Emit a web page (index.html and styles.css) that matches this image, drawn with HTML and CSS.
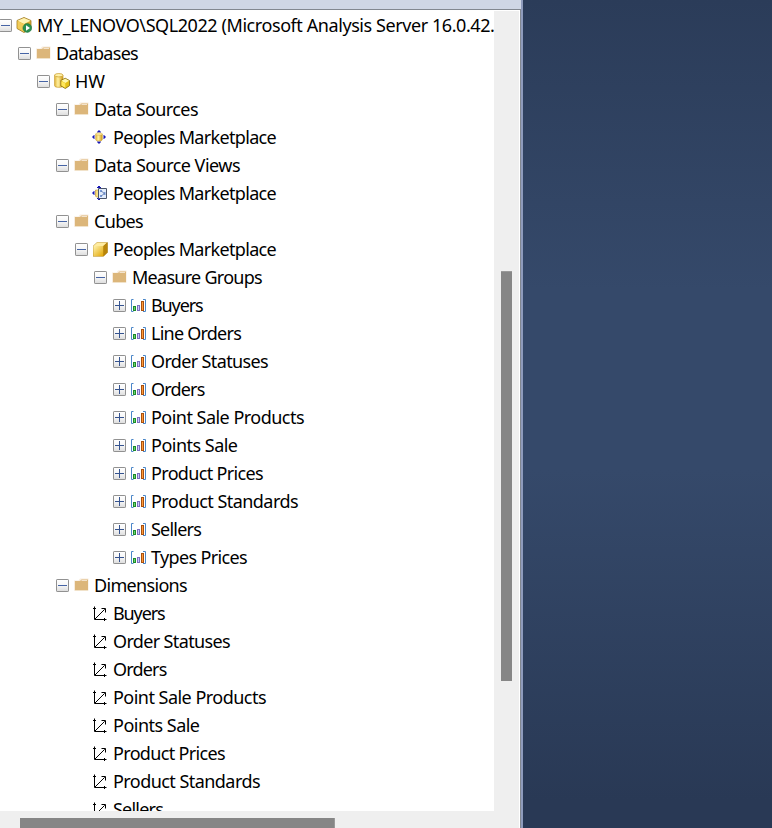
FILE: index.html
```html
<!DOCTYPE html>
<html lang="en">
<head>
<meta charset="utf-8">
<title>Object Explorer</title>
<link rel="stylesheet" href="styles.css">
</head>
<body>
<svg class="defs" aria-hidden="true">
  <defs>
    <linearGradient id="gold" x1="0" y1="0" x2="1" y2="1"><stop offset="0" stop-color="#fff3b0"/><stop offset="1" stop-color="#e2a500"/></linearGradient>
    <linearGradient id="cyl" x1="0" y1="0" x2="1" y2="0"><stop offset="0" stop-color="#e3b83e"/><stop offset=".4" stop-color="#fff0a0"/><stop offset="1" stop-color="#d09a18"/></linearGradient>
    <linearGradient id="box" x1="0" y1="0" x2="0" y2="1"><stop offset="0" stop-color="#fff"/><stop offset=".5" stop-color="#f6f6f6"/><stop offset="1" stop-color="#dcdcdc"/></linearGradient>
  </defs>
  <symbol id="minus" viewBox="0 0 13 13"><rect x=".5" y=".5" width="12" height="12" rx=".6" fill="url(#box)" stroke="#919191"/><path d="M2 6.5h9" stroke="#4664a5"/></symbol>
  <symbol id="plus" viewBox="0 0 13 13"><rect x=".5" y=".5" width="12" height="12" rx=".6" fill="url(#box)" stroke="#919191"/><path d="M2 6.5h9M6.5 2v9" stroke="#35538f"/></symbol>
  <symbol id="folder" viewBox="0 0 16 16"><path d="M1 3.500h4.500L7 1.500h8.500v12.300H1z" fill="#f8ecdd"/><path d="M2 4h5l1.500-1.500H15V13.300H2z" fill="#dcb67a"/><path d="M8.500 3.500H14" stroke="#f3e3cc"/></symbol>
  <symbol id="server" viewBox="0 0 16 16"><path d="M8 .5l7 3v8l-7 4-7-4v-8z" fill="#d9aa2c" stroke="#9a7720" stroke-width=".8"/><path d="M8 1l6.5 2.8L8 7 1.500 3.800z" fill="#fff4b5"/><path d="M1.500 4L8 7v8l-6.500-3.700z" fill="#f1cc58"/><circle cx="11.300" cy="11" r="4.400" fill="#2a9150" stroke="#1c7038" stroke-width=".5"/><path d="M10 8.300v5.400l4-2.700z" fill="#fff"/></symbol>
  <symbol id="database" viewBox="0 0 16 16"><path d="M.6 2.200v10.500c0 2.200 8.400 2.200 8.400 0V2.200z" fill="url(#cyl)" stroke="#c89b2b" stroke-width=".7"/><ellipse cx="4.800" cy="2.200" rx="4.200" ry="1.700" fill="#fff2a9" stroke="#c89b2b" stroke-width=".7"/><path d="M11.300 5.300l4.200 2.200v5.200l-4.200 2.800-4.400-2.600V7.400z" fill="#e5c119" stroke="#80670c" stroke-width=".8"/><path d="M11.300 5.800l3.700 1.900-3.700 2.200-3.900-2.200z" fill="#fff8b0"/><path d="M7.400 8.200l3.900 2.100v4.500l-3.900-2.300z" fill="#ffe75c"/></symbol>
  <symbol id="source" viewBox="0 0 16 16"><path d="M6 1.500h2v1h1v1H5v-1h1zM6 14.500h2v-1h1v-1H5v1h1zM.5 7v2h1v1h1V6h-1v1zM13.500 7v2h-1v1h-1V6h1v1z" fill="#1717b5"/><path d="M3.700 5v5.700c0 1.700 6.600 1.700 6.600 0V5z" fill="url(#cyl)" stroke="#c2942a" stroke-width=".5"/><ellipse cx="7" cy="5" rx="3.300" ry="1.200" fill="#fff0a5" stroke="#c2942a" stroke-width=".4"/></symbol>
  <symbol id="view" viewBox="0 0 16 16"><path d="M6 1h2v1h1v1H5V2h1zM6 15h2v-1h1v-1H5v1h1zM.5 7v2h1v1h1V6h-1v1z" fill="#1717b5"/><path d="M3.500 5v6c0 1.500 4 1.500 4 0V5z" fill="url(#cyl)" stroke="#b88920" stroke-width=".5"/><path d="M6.500 3.500h8v10h-8z" fill="#e2ecfc" stroke="#4a546a"/><path d="M8 5h2v2H8zM11.500 7h2v3h-2zM8 10h2v2H8z" fill="#7898d5"/><path d="M9.500 6L12 8.500 9.500 11" stroke="#526a9b" fill="none" stroke-width=".8"/></symbol>
  <symbol id="cube" viewBox="0 0 16 16"><path d="M1 5l4-3.800h10.700V11.500L11.500 15.500H1z" fill="#a87a0c"/><path d="M1.300 5l3.900-3.500h9.900L11.400 5z" fill="#ffeca0"/><path d="M1.300 5h10.200v10.200H1.300z" fill="url(#gold)"/><path d="M11.500 5l3.800-3.300v9.600l-3.800 3.900z" fill="#b98509"/></symbol>
  <symbol id="measure" viewBox="0 0 16 16"><path d="M3.500 2.500h-2v12h2M13 2.500h2.500v12H13" fill="none" stroke="#4a86c8"/><path d="M3 9h3v5H3z" fill="#1c8a2b"/><path d="M4 10h1v3H4z" fill="#6bd66b"/><path d="M7 8h3v6H7z" fill="#7a70c0"/><path d="M8 9h1v4H8z" fill="#cdc7fa"/><path d="M11 4h3v10h-3z" fill="#a8500f"/><path d="M12 5h1v8h-1z" fill="#ff9a38"/></symbol>
  <symbol id="axes" viewBox="0 0 16 16"><path d="M2.500 1.500v13H14.500" fill="none" stroke="#000"/><path d="M3 14l9.700-9.700M1 3.500h3M12.500 13v3M9.500 3.500h4v4" fill="none" stroke="#000"/></symbol>
</svg>
<div class="window">
  <div class="panel">
    <div class="titlebar"></div>
    <div class="content">
      <main class="tree" id="tree"></main>
      <div class="vscroll"><div class="vthumb"></div></div>
      <div class="hscroll"><div class="hthumb"></div></div>
    </div>
  </div>
  <div class="workspace"></div>
</div>
<script src="tree.js"></script>
</body>
</html>
```
FILE: tree.js
```js
// Each item: depth, toggle, icon, label, label width in pixels.
const items = [
  [0, "minus", "server", "MY_LENOVO\\SQL2022 (Microsoft Analysis Server 16.0.42.", 457.5],
  [1, "minus", "folder", "Databases", 82],
  [2, "minus", "database", "HW", 30],
  [3, "minus", "folder", "Data Sources", 104],
  [4, "", "source", "Peoples Marketplace", 163],
  [3, "minus", "folder", "Data Source Views", 146],
  [4, "", "view", "Peoples Marketplace", 163],
  [3, "minus", "folder", "Cubes", 49],
  [4, "minus", "cube", "Peoples Marketplace", 163],
  [5, "minus", "folder", "Measure Groups", 130],
  [6, "plus", "measure", "Buyers", 51.5],
  [6, "plus", "measure", "Line Orders", 90],
  [6, "plus", "measure", "Order Statuses", 117],
  [6, "plus", "measure", "Orders", 53.5],
  [6, "plus", "measure", "Point Sale Products", 153],
  [6, "plus", "measure", "Points Sale", 86.5],
  [6, "plus", "measure", "Product Prices", 112],
  [6, "plus", "measure", "Product Standards", 147],
  [6, "plus", "measure", "Sellers", 50],
  [6, "plus", "measure", "Types Prices", 96],
  [3, "minus", "folder", "Dimensions", 93],
  [4, "", "axes", "Buyers", 51.5],
  [4, "", "axes", "Order Statuses", 117],
  [4, "", "axes", "Orders", 53.5],
  [4, "", "axes", "Point Sale Products", 153],
  [4, "", "axes", "Points Sale", 86.5],
  [4, "", "axes", "Product Prices", 112],
  [4, "", "axes", "Product Standards", 147],
  [4, "", "axes", "Sellers", 50]
];
const tree = document.getElementById("tree");
for (const [depth, toggle, icon, label, width] of items) {
  const row = document.createElement("div");
  row.className = "row";
  row.style.paddingLeft = depth * 19 + "px";
  row.innerHTML =
    `<svg class="toggle">${toggle ? `<use href="#${toggle}"/>` : ""}</svg>` +
    `<svg class="icon"><use href="#${icon}"/></svg><span class="label"></span>`;
  const text = row.querySelector(".label");
  text.textContent = label;
  tree.append(row);
  const natural = text.getBoundingClientRect().width;
  text.style.letterSpacing = (width - natural) / label.length + "px";
}
```
FILE: styles.css
```css
* { box-sizing: border-box; }
body { margin: 0; overflow: hidden; }
.defs { position: absolute; width: 0; height: 0; }
.window { display: flex; width: 772px; height: 828px; }
.panel {
  display: flex;
  flex-direction: column;
  width: 523px;
  background: #fff;
  border-right: 2px solid #8e9bbc;
}
.titlebar { height: 10px; flex: none; background: #cfd6e5; border-bottom: 1px solid #828790; }
.content {
  flex: 1;
  display: grid;
  grid-template: 800px 17px / 494px 25px;
  padding-top: 1px;
  border-right: 1px solid #828790;
}
.tree { overflow: hidden; padding-top: 1px; border-bottom-right-radius: 2px; background: #fff; }
.row { display: flex; height: 28px; white-space: nowrap; }
.toggle { flex: none; width: 13px; height: 13px; margin: 7px 4px 0 -1px; }
.icon { flex: none; width: 16px; height: 16px; margin-top: 5px; }
.label {
  flex: none;
  margin-left: 5px;
  font: 18px/26px "Noto Sans", "Open Sans", sans-serif;
  color: #000;
}
.vscroll { background: #efefef; padding: 260px 7px 0; }
.vthumb { width: 11px; height: 410px; background: #868686; border-top: 1px solid #9a9a9a; }
.hscroll { grid-column: 1 / 3; background: #efefef; padding: 7px 0 0 20px; }
.hthumb { width: 315px; height: 10px; background: #868686; border-right: 1px solid #9a9a9a; }
.workspace { flex: 1; background: linear-gradient(#2b3c59 0, #35496a 290px, #35496a 470px, #293955 800px); }
```
